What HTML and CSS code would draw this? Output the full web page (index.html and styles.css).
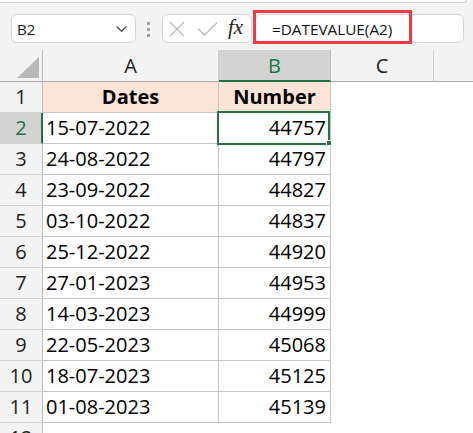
FILE: index.html
```html
<!DOCTYPE html>
<html>
<head>
<meta charset="utf-8">
<link rel="stylesheet" href="styles.css">
</head>
<body>
<div class="app">
  <div class="topstrip"></div>
  <div class="toolbar">
    <div class="namebox">
      <span class="nb-text">B2</span>
      <svg class="chev" width="11" height="6" viewBox="0 0 11 6"><path d="M0.5 0.5 L5.5 5.2 L10.5 0.5" fill="none" stroke="#444" stroke-width="1.3"/></svg>
    </div>
    <div class="dots"><i></i><i></i><i></i></div>
    <div class="fxbox">
      <svg class="btn-x" width="16" height="16" viewBox="0 0 16 16"><path d="M1 1 L15 15 M15 1 L1 15" stroke="#b9b9b9" stroke-width="1.3" fill="none"/></svg>
      <svg class="btn-ok" width="21" height="14" viewBox="0 0 21 14"><path d="M1 6.5 L7.5 13 L20 0.8" stroke="#b9b9b9" stroke-width="1.3" fill="none"/></svg>
      <span class="fx">fx</span>
    </div>
    <div class="formula">
      <span class="ftext">=DATEVALUE(A2)</span>
      <div class="redbox"></div>
    </div>
  </div>
  <div class="sheet">
    <div class="ch corner"><div class="tri"></div></div>
    <div class="ch">A</div>
    <div class="ch sel">B</div>
    <div class="ch">C</div>
    <div class="ch last"></div>

    <div class="rh">1</div>
    <div class="c hdr">Dates</div>
    <div class="c hdr">Number</div>
    <div class="e"></div><div class="e"></div>

    <div class="rh sel">2</div>
    <div class="c">15-07-2022</div>
    <div class="c n active">44757</div>
    <div class="e"></div><div class="e"></div>

    <div class="rh">3</div>
    <div class="c">24-08-2022</div>
    <div class="c n">44797</div>
    <div class="e"></div><div class="e"></div>

    <div class="rh">4</div>
    <div class="c">23-09-2022</div>
    <div class="c n">44827</div>
    <div class="e"></div><div class="e"></div>

    <div class="rh">5</div>
    <div class="c">03-10-2022</div>
    <div class="c n">44837</div>
    <div class="e"></div><div class="e"></div>

    <div class="rh">6</div>
    <div class="c">25-12-2022</div>
    <div class="c n">44920</div>
    <div class="e"></div><div class="e"></div>

    <div class="rh">7</div>
    <div class="c">27-01-2023</div>
    <div class="c n">44953</div>
    <div class="e"></div><div class="e"></div>

    <div class="rh">8</div>
    <div class="c">14-03-2023</div>
    <div class="c n">44999</div>
    <div class="e"></div><div class="e"></div>

    <div class="rh">9</div>
    <div class="c">22-05-2023</div>
    <div class="c n">45068</div>
    <div class="e"></div><div class="e"></div>

    <div class="rh">10</div>
    <div class="c">18-07-2023</div>
    <div class="c n">45125</div>
    <div class="e"></div><div class="e"></div>

    <div class="rh">11</div>
    <div class="c">01-08-2023</div>
    <div class="c n">45139</div>
    <div class="e"></div><div class="e"></div>

    <div class="rh">12</div>
    <div class="e"></div><div class="e"></div><div class="e"></div><div class="e"></div>
  </div>
</div>
</body>
</html>
```
FILE: styles.css
```css
*, *::before, *::after { box-sizing: border-box; }
html, body { margin: 0; padding: 0; }
body {
  width: 473px;
  height: 433px;
  overflow: hidden;
  background: #ffffff;
  font-family: "Open Sans", "Liberation Sans", sans-serif;
  color: #000;
}
.app { width: 473px; height: 433px; overflow: hidden; background: #f3f3f3; }

.topstrip {
  width: 467px;
  height: 3px;
  background: #ffffff;
  border-bottom: 1px solid #d4d4d4;
  border-right: 1px solid #d4d4d4;
  border-bottom-right-radius: 8px;
}

.toolbar {
  height: 47px;
  display: flex;
  align-items: flex-start;
  padding-top: 11px;
  padding-left: 11px;
}

.namebox {
  width: 125px;
  height: 29px;
  background: #fff;
  border: 1px solid #d6d6d6;
  border-radius: 6px;
  display: flex;
  align-items: center;
  justify-content: space-between;
  padding: 0 8px 0 5px;
}
.nb-text { font-size: 15px; color: #1a1a1a; }
.chev { display: block; margin-top: 1px; }

.dots {
  width: 2px;
  margin: 8px 13px 0 11px;
  display: flex;
  flex-direction: column;
  gap: 3px;
}
.dots i { display: block; width: 3px; height: 3px; background: #9a9a9a; border-radius: 1px; }

.fxbox {
  width: 90px;
  height: 29px;
  background: #fff;
  border: 1px solid #d6d6d6;
  border-radius: 6px;
  display: flex;
  align-items: center;
  padding-left: 6px;
}
.btn-x { display: block; margin-top: 1px; }
.btn-ok { display: block; margin-left: 12px; margin-top: 1px; }
.fx {
  margin-left: 10px;
  font-family: "Liberation Serif", "DejaVu Serif", serif;
  font-style: italic;
  font-size: 21px;
  color: #222;
  line-height: 1;
  margin-top: -2px;
}

.formula {
  position: relative;
  margin-left: 3px;
  width: 209px;
  height: 29px;
  background: #fff;
  border: 1px solid #d6d6d6;
  border-radius: 6px;
  display: flex;
  align-items: center;
  padding-left: 16px;
}
.ftext { font-size: 15.3px; color: #111; }
.redbox {
  position: absolute;
  left: -3px;
  top: -5px;
  width: 159px;
  height: 34px;
  border: 3px solid #ee3b43;
}

.sheet {
  display: grid;
  grid-template-columns: 43px 176px 112px 103px 39px;
  grid-template-rows: 32px repeat(12, 31px);
  background: #fff;
}

.ch {
  background: #f3f3f3;
  border-bottom: 1px solid #ababab;
  border-right: 1px solid #cfcfcf;
  font-size: 20px;
  line-height: 30px;
  text-align: center;
  color: #222;
  padding-top: 1px;
}
.ch.last { border-right: none; }
.ch.sel {
  background: #d3d3d3;
  color: #217346;
  border-bottom: 2px solid #217346;
  border-right-color: #bcbcbc;
}
.ch.corner {
  display: flex;
  align-items: flex-end;
  justify-content: flex-end;
  padding: 0 3px 3px 0;
  border-right-color: #bcbcbc;
}
.tri {
  width: 22px;
  height: 21px;
  background: #b8b8b8;
  clip-path: polygon(100% 0, 100% 100%, 0 100%);
}

.rh {
  background: #f3f3f3;
  border-right: 1px solid #bcbcbc;
  border-bottom: 1px solid #d2d2d2;
  font-size: 20px;
  line-height: 30px;
  text-align: center;
  color: #222;
}
.rh.sel {
  background: #d3d3d3;
  color: #217346;
  border-right: 2px solid #217346;
  padding-left: 1px;
}

.c {
  border-right: 1px solid #c6c6c6;
  border-bottom: 1px solid #c6c6c6;
  font-size: 20px;
  line-height: 30px;
  padding: 0 3px 0 3px;
  white-space: nowrap;
  background: #fff;
}
.c.n { text-align: right; padding-right: 4px; }
.c.hdr {
  background: #fce4d6;
  font-weight: 700;
  text-align: center;
}
.c.active { position: relative; }
.c.active::before {
  content: "";
  position: absolute;
  left: -2px;
  top: -2px;
  width: 113px;
  height: 34px;
  border: 2px solid #217346;
}
.c.active::after {
  content: "";
  position: absolute;
  left: 107px;
  top: 27px;
  width: 6px;
  height: 6px;
  background: #217346;
  border: 1px solid #fff;
}

.e { background: #fff; }
```
